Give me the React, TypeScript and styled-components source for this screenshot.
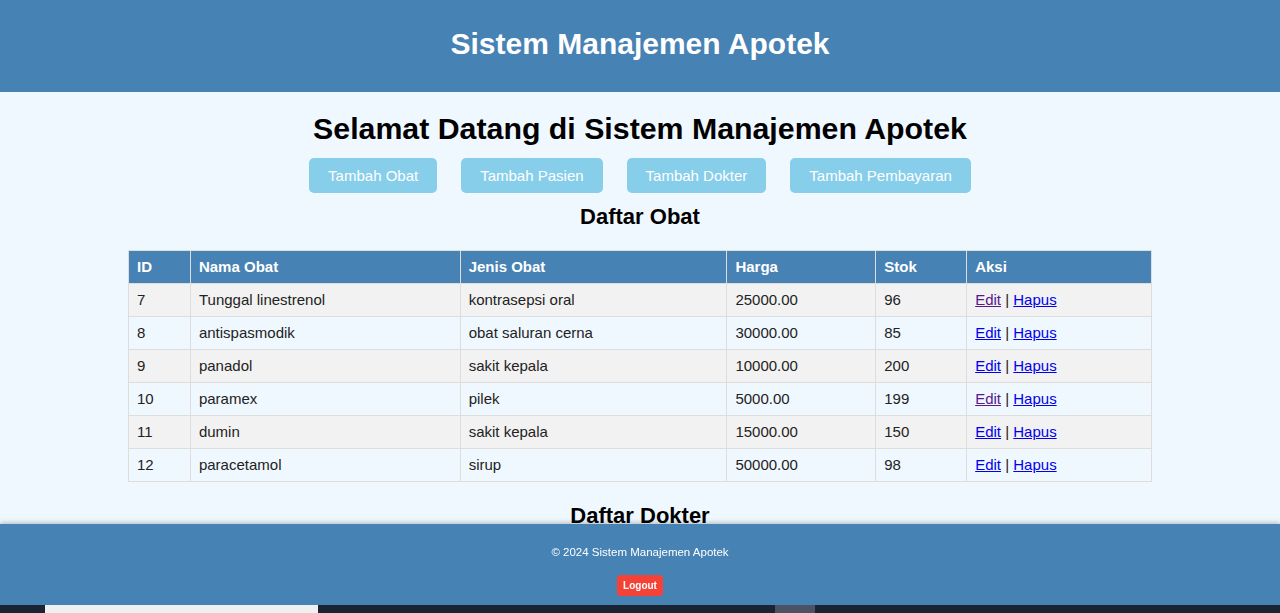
import React from "react";
import styled, { createGlobalStyle } from "styled-components";

const GlobalStyle = createGlobalStyle`
  body {
    margin: 0;
    background-color: #f0f8ff;
    font-family: "Liberation Sans", Arial, sans-serif;
    color: #000;
  }
`;

const Header = styled.header`
  background-color: #4682b4;
  height: 92px;
  display: flex;
  align-items: center;
  justify-content: center;
`;

const Title = styled.h1`
  margin: 0 0 4px;
  color: #fff;
  font-size: 30px;
  font-weight: bold;
`;

const Main = styled.main`
  display: flex;
  flex-direction: column;
  align-items: center;
  padding-bottom: 120px;
`;

const Welcome = styled.h2`
  margin: 20px 0 12px;
  font-size: 30.3px;
  font-weight: bold;
`;

const Nav = styled.nav`
  display: flex;
  gap: 24px;
`;

const NavButton = styled.a`
  display: block;
  background-color: #87ceeb;
  color: #fff;
  font-size: 15px;
  padding: 9px 19px;
  border-radius: 5px;
  text-decoration: none;
`;

const SectionTitle = styled.h3<{ $gap?: number }>`
  margin: ${(p) => p.$gap ?? 11}px 0 20px;
  font-size: 22px;
  font-weight: bold;
`;

const Table = styled.table`
  width: 80%;
  border-collapse: collapse;
  font-size: 15px;
  line-height: 16px;
`;

const Th = styled.th<{ $w: number }>`
  width: ${(p) => p.$w}px;
  background-color: #4682b4;
  color: #fff;
  text-align: left;
  padding: 8px;
  border: 1px solid #ddd;
  font-weight: bold;
`;

const Row = styled.tr<{ $odd: boolean }>`
  background-color: ${(p) => (p.$odd ? "#f2f2f2" : "#f0f8ff")};
`;

const Td = styled.td`
  padding: 8px;
  border: 1px solid #ddd;
  color: #222;
`;

const ActionLink = styled.a<{ $visited?: boolean }>`
  color: ${(p) => (p.$visited ? "#551a8b" : "#0000ee")};
  text-decoration: underline;
`;

const Footer = styled.footer`
  position: fixed;
  left: 0;
  right: 0;
  bottom: 8px;
  height: 81px;
  background-color: #4682b4;
  box-shadow: 0 -2px 4px rgba(0, 0, 0, 0.2);
  display: flex;
  flex-direction: column;
  align-items: center;
  color: #fff;
`;

const Copy = styled.p`
  margin: 22px 0 0;
  font-size: 11.5px;
`;

const LogoutButton = styled.button`
  margin-top: 17px;
  background-color: #f44336;
  color: #fff;
  border: none;
  border-radius: 4px;
  padding: 5px 6px;
  font-family: "Liberation Sans", Arial, sans-serif;
  font-size: 10px;
  line-height: 11px;
  font-weight: bold;
`;

const Taskbar = styled.div`
  position: fixed;
  left: 0;
  right: 0;
  bottom: 0;
  height: 8px;
  background-color: #1b2433;
  display: flex;
`;

const TaskItem = styled.div<{ $left: number; $w: number; $bg: string }>`
  margin-left: ${(p) => p.$left}px;
  width: ${(p) => p.$w}px;
  background-color: ${(p) => p.$bg};
`;

const columns = [
  { label: "ID", w: 45 },
  { label: "Nama Obat", w: 253 },
  { label: "Jenis Obat", w: 250 },
  { label: "Harga", w: 132 },
  { label: "Stok", w: 74 },
  { label: "Aksi", w: 168 },
];

const obat = [
  { id: 7, nama: "Tunggal linestrenol", jenis: "kontrasepsi oral", harga: "25000.00", stok: 96, visited: true },
  { id: 8, nama: "antispasmodik", jenis: "obat saluran cerna", harga: "30000.00", stok: 85 },
  { id: 9, nama: "panadol", jenis: "sakit kepala", harga: "10000.00", stok: 200 },
  { id: 10, nama: "paramex", jenis: "pilek", harga: "5000.00", stok: 199, visited: true },
  { id: 11, nama: "dumin", jenis: "sakit kepala", harga: "15000.00", stok: 150 },
  { id: 12, nama: "paracetamol", jenis: "sirup", harga: "50000.00", stok: 98 },
];

function App() {
  return (
    <>
      <GlobalStyle />
      <Header>
        <Title>Sistem Manajemen Apotek</Title>
      </Header>
      <Main>
        <Welcome>Selamat Datang di Sistem Manajemen Apotek</Welcome>
        <Nav>
          <NavButton href="#">Tambah Obat</NavButton>
          <NavButton href="#">Tambah Pasien</NavButton>
          <NavButton href="#">Tambah Dokter</NavButton>
          <NavButton href="#">Tambah Pembayaran</NavButton>
        </Nav>
        <SectionTitle>Daftar Obat</SectionTitle>
        <Table>
          <thead>
            <tr>
              {columns.map((c) => (
                <Th key={c.label} $w={c.w}>
                  {c.label}
                </Th>
              ))}
            </tr>
          </thead>
          <tbody>
            {obat.map((o, i) => (
              <Row key={o.id} $odd={i % 2 === 0}>
                <Td>{o.id}</Td>
                <Td>{o.nama}</Td>
                <Td>{o.jenis}</Td>
                <Td>{o.harga}</Td>
                <Td>{o.stok}</Td>
                <Td>
                  <ActionLink href="#" $visited={o.visited}>
                    Edit
                  </ActionLink>{" "}
                  | <ActionLink href="#">Hapus</ActionLink>
                </Td>
              </Row>
            ))}
          </tbody>
        </Table>
        <SectionTitle $gap={21}>Daftar Dokter</SectionTitle>
      </Main>
      <Footer>
        <Copy>© 2024 Sistem Manajemen Apotek</Copy>
        <LogoutButton>Logout</LogoutButton>
      </Footer>
      <Taskbar>
        <TaskItem $left={45} $w={273} $bg="#f0f0f0" />
        <TaskItem $left={457} $w={40} $bg="#4a5263" />
      </Taskbar>
    </>
  );
}

export default App;
